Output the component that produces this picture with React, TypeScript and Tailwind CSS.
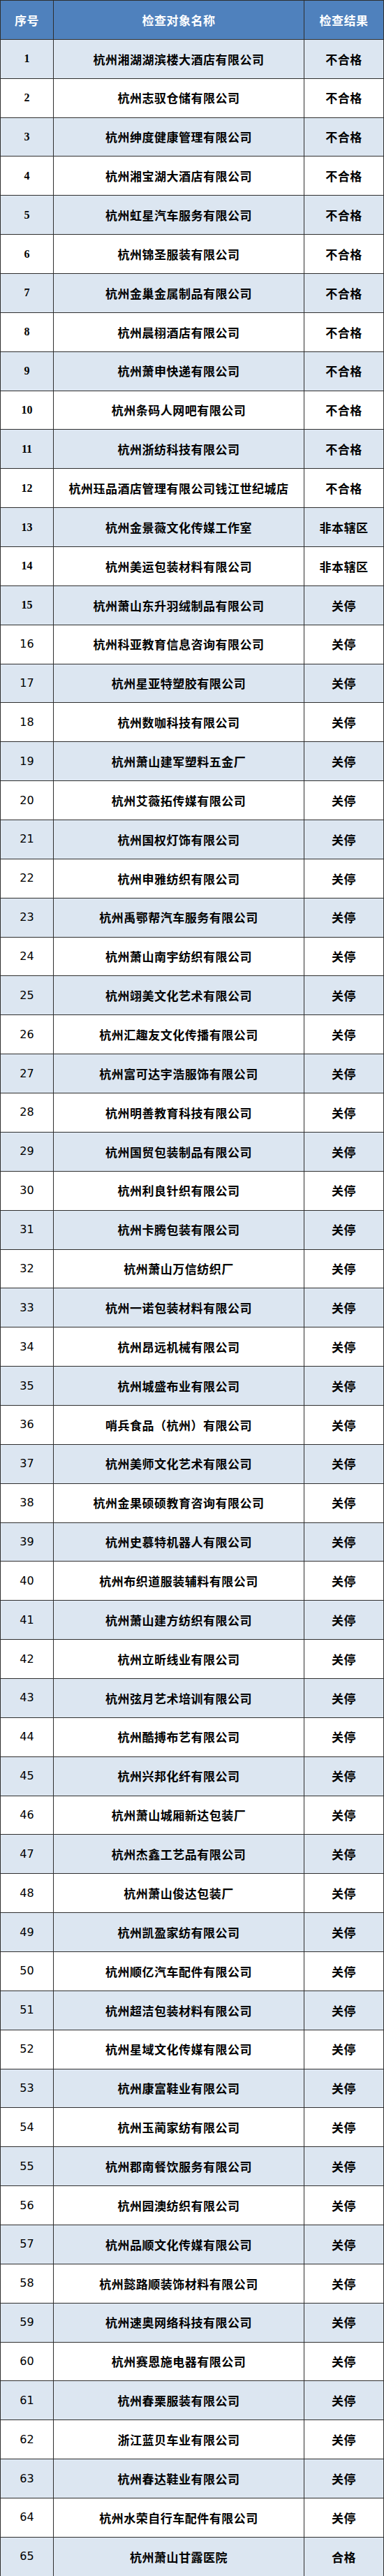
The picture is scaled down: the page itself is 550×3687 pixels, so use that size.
import React from "react";

const rows: [string, string][] = [
  ["杭州湘湖湖滨楼大酒店有限公司", "不合格"],
  ["杭州志驭仓储有限公司", "不合格"],
  ["杭州绅度健康管理有限公司", "不合格"],
  ["杭州湘宝湖大酒店有限公司", "不合格"],
  ["杭州虹星汽车服务有限公司", "不合格"],
  ["杭州锦圣服装有限公司", "不合格"],
  ["杭州金巢金属制品有限公司", "不合格"],
  ["杭州晨栩酒店有限公司", "不合格"],
  ["杭州萧申快递有限公司", "不合格"],
  ["杭州条码人网吧有限公司", "不合格"],
  ["杭州浙纺科技有限公司", "不合格"],
  ["杭州珏品酒店管理有限公司钱江世纪城店", "不合格"],
  ["杭州金景薇文化传媒工作室", "非本辖区"],
  ["杭州美运包装材料有限公司", "非本辖区"],
  ["杭州萧山东升羽绒制品有限公司", "关停"],
  ["杭州科亚教育信息咨询有限公司", "关停"],
  ["杭州星亚特塑胶有限公司", "关停"],
  ["杭州数咖科技有限公司", "关停"],
  ["杭州萧山建军塑料五金厂", "关停"],
  ["杭州艾薇拓传媒有限公司", "关停"],
  ["杭州国权灯饰有限公司", "关停"],
  ["杭州申雅纺织有限公司", "关停"],
  ["杭州禹鄂帮汽车服务有限公司", "关停"],
  ["杭州萧山南宇纺织有限公司", "关停"],
  ["杭州翊美文化艺术有限公司", "关停"],
  ["杭州汇趣友文化传播有限公司", "关停"],
  ["杭州富可达宇浩服饰有限公司", "关停"],
  ["杭州明善教育科技有限公司", "关停"],
  ["杭州国贸包装制品有限公司", "关停"],
  ["杭州利良针织有限公司", "关停"],
  ["杭州卡腾包装有限公司", "关停"],
  ["杭州萧山万信纺织厂", "关停"],
  ["杭州一诺包装材料有限公司", "关停"],
  ["杭州昂远机械有限公司", "关停"],
  ["杭州城盛布业有限公司", "关停"],
  ["哨兵食品（杭州）有限公司", "关停"],
  ["杭州美师文化艺术有限公司", "关停"],
  ["杭州金果硕硕教育咨询有限公司", "关停"],
  ["杭州史慕特机器人有限公司", "关停"],
  ["杭州布织道服装辅料有限公司", "关停"],
  ["杭州萧山建方纺织有限公司", "关停"],
  ["杭州立昕线业有限公司", "关停"],
  ["杭州弦月艺术培训有限公司", "关停"],
  ["杭州酷搏布艺有限公司", "关停"],
  ["杭州兴邦化纤有限公司", "关停"],
  ["杭州萧山城厢新达包装厂", "关停"],
  ["杭州杰鑫工艺品有限公司", "关停"],
  ["杭州萧山俊达包装厂", "关停"],
  ["杭州凯盈家纺有限公司", "关停"],
  ["杭州顺亿汽车配件有限公司", "关停"],
  ["杭州超洁包装材料有限公司", "关停"],
  ["杭州星域文化传媒有限公司", "关停"],
  ["杭州康富鞋业有限公司", "关停"],
  ["杭州玉蔺家纺有限公司", "关停"],
  ["杭州郡南餐饮服务有限公司", "关停"],
  ["杭州园澳纺织有限公司", "关停"],
  ["杭州品顺文化传媒有限公司", "关停"],
  ["杭州懿路顺装饰材料有限公司", "关停"],
  ["杭州速奥网络科技有限公司", "关停"],
  ["杭州赛恩施电器有限公司", "关停"],
  ["杭州春栗服装有限公司", "关停"],
  ["浙江蓝贝车业有限公司", "关停"],
  ["杭州春达鞋业有限公司", "关停"],
  ["杭州水荣自行车配件有限公司", "关停"],
  ["杭州萧山甘露医院", "合格"],
];

const cjk = { fontFamily: '"Noto Sans CJK SC", "Noto Sans", sans-serif' };

export default function App() {
  return (
    <div className="w-[550px] bg-white" style={cjk}>
      <div className="border-t border-l border-[#2e2e2e]">
        <div className="grid h-[55.86px] grid-cols-[76px_359px_1fr] border-b border-[#2e2e2e] bg-[#4f81bd] text-[17px] font-bold tracking-[0.5px] text-white">
          <div className="flex items-center justify-center border-r border-[#2e2e2e]">序号</div>
          <div className="flex items-center justify-center border-r border-[#2e2e2e]">检查对象名称</div>
          <div className="flex items-center justify-center border-r border-[#2e2e2e]">检查结果</div>
        </div>
        {rows.map(([name, result], i) => {
          const n = i + 1;
          const odd = n % 2 === 1;
          return (
            <div
              key={n}
              className={
                "grid h-[55.86px] grid-cols-[76px_359px_1fr] border-b border-[#2e2e2e] text-[17px] font-bold tracking-[0.5px] text-black " +
                (odd ? "bg-[#dce6f1]" : "bg-white")
              }
            >
              <div
                className={
                  "flex items-center justify-center border-r border-[#2e2e2e] text-[16px] tracking-normal " +
                  (n <= 15 ? "font-['Liberation_Serif',serif]" : "font-['DejaVu_Sans',sans-serif] font-normal")
                }
              >
                {n}
              </div>
              <div className="flex items-center justify-center border-r border-[#2e2e2e] whitespace-nowrap">
                {name}
              </div>
              <div className="flex items-center justify-center border-r border-[#2e2e2e] whitespace-nowrap">
                {result}
              </div>
            </div>
          );
        })}
      </div>
    </div>
  );
}
